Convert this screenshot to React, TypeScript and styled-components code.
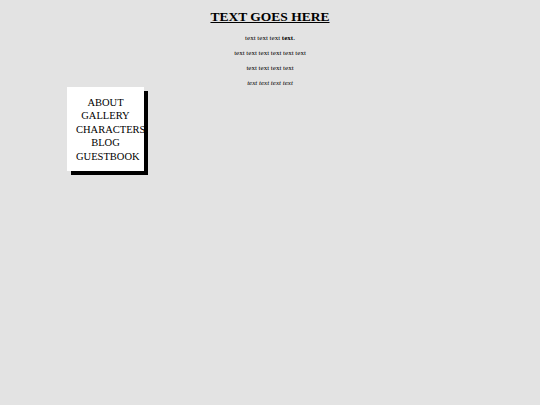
import styled, { createGlobalStyle } from "styled-components";

const GlobalStyle = createGlobalStyle`
  html, body {
    margin: 0;
    padding: 0;
    background: #e3e3e3;
    font-family: "Liberation Serif", "Times New Roman", serif;
    color: #000;
  }
`;

const Page = styled.div`
  width: 540px;
  height: 405px;
  padding-top: 9px;
  box-sizing: border-box;
`;

const Title = styled.h1`
  margin: 0;
  text-align: center;
  font-size: 13.5px;
  line-height: 16px;
  font-weight: bold;
  text-decoration: underline;
`;

const Intro = styled.div`
  display: flex;
  flex-direction: column;
  gap: 7px;
  margin-top: 9px;
`;

const Line = styled.p<{ $italic?: boolean }>`
  margin: 0;
  text-align: center;
  font-size: 7px;
  line-height: 8px;
  font-style: ${(p) => (p.$italic ? "italic" : "normal")};
`;

const Nav = styled.nav`
  margin: 0 0 0 67px;
  width: 59px;
  padding: 8.5px 9px 7.5px;
  background: #fff;
  box-shadow: 4px 4px 0 #000;
  text-align: center;
`;

const NavItem = styled.div`
  font-size: 10.5px;
  line-height: 13.5px;
  white-space: nowrap;
`;

const links = ["ABOUT", "GALLERY", "CHARACTERS", "BLOG", "GUESTBOOK"];

export default function App() {
  return (
    <Page>
      <GlobalStyle />
      <Title>TEXT GOES HERE</Title>
      <Intro>
        <Line>
          text text text <b>text</b>.
        </Line>
        <Line>text text text text text text</Line>
        <Line>text text text text</Line>
        <Line $italic>text text text text</Line>
      </Intro>
      <Nav>
        {links.map((l) => (
          <NavItem key={l}>{l}</NavItem>
        ))}
      </Nav>
    </Page>
  );
}
